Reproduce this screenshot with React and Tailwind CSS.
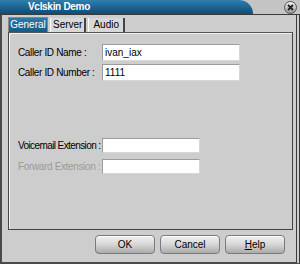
const font = { fontFamily: '"Liberation Sans", Arial, sans-serif' };

const Field = ({ label, disabled, wide, value, tight }) => (
  <div className="flex items-center h-[17px]">
    <span
      className={`w-[84px] shrink-0 text-[10px] ${tight ? "tracking-[-0.6px]" : "tracking-[-0.35px]"} leading-none whitespace-nowrap ${disabled ? "text-[#9a9a9a]" : "text-black"}`}
    >
      {label}
    </span>
    <div
      className={`${wide ? "w-[138px] h-[17px]" : "w-[98px] h-[15px]"} bg-white border border-[#9c9c9c] border-r-[#d8d8d8] border-b-[#d8d8d8] text-[10px] leading-none flex items-center px-[2px]`}
    >
      {value}
    </div>
  </div>
);

const Button = ({ children }) => (
  <button className="w-[60px] h-[19px] rounded-[4px] border border-[#7a7a7a] bg-gradient-to-b from-[#f2f2f2] via-[#d6d6d6] to-[#ababab] text-[10px] text-black leading-none shadow-[inset_0_1px_0_#ffffff]">
    {children}
  </button>
);

export default function App() {
  return (
    <div className="w-[300px] h-[264px] bg-[#cdcdcd] flex flex-col overflow-hidden" style={font}>
      {/* title bar */}
      <div className="h-[15px] flex border-b border-[#3a3a3a] bg-[#c4c4c4]">
        <div className="w-[253px] h-full rounded-tr-[16px] bg-gradient-to-b from-[#2f7fae] via-[#1c6592] to-[#0f4c74] flex items-center pl-[28px]">
          <span className="text-white font-bold text-[10px] leading-none tracking-[-0.3px]">Vclskin Demo</span>
        </div>
        <div className="flex-1 flex items-center justify-end pr-[3px]">
          <div className="w-[13px] h-[13px] rounded-full bg-gradient-to-b from-[#f0f0f0] to-[#9a9a9a] border border-[#555] flex items-center justify-center">
            <svg width="7" height="7" viewBox="0 0 7 7">
              <path d="M1 1L6 6M6 1L1 6" stroke="#222" strokeWidth="1.8" />
            </svg>
          </div>
        </div>
      </div>

      {/* body */}
      <div className="flex-1 flex flex-col border-l-[2px] border-double border-[#4a4a4a] border-r-[4px] border-r-[#3c3c3c] border-b-[2px] border-b-[#4a4a4a] pl-[6px] pr-[3px]">
        {/* tabs */}
        <div className="flex items-end h-[16px] mt-[1px] gap-[2px]">
          <div className="h-[15px] w-[40px] justify-center bg-gradient-to-b from-[#2b7aa8] to-[#145a86] text-white text-[10px] leading-none flex items-center border border-[#888] border-b-0">
            General
          </div>
          <div className="h-[14px] px-[2px] bg-[#d8d8d8] text-black text-[10px] leading-none flex items-center border-l border-l-white border-r-[2px] border-r-[#444]">
            Server
          </div>
          <div className="h-[14px] px-[4px] bg-[#d8d8d8] text-black text-[10px] leading-none flex items-center border-l border-l-white border-r-[2px] border-r-[#444]">
            Audio
          </div>
        </div>

        {/* panel */}
        <div className="h-[198px] border border-[#444] border-t-[#555] shadow-[inset_1px_1px_0_#f2f2f2] flex flex-col pl-[9px] pt-[11px]">
          <div className="flex flex-col gap-[3px]">
            <Field label="Caller ID Name :" wide value="ivan_iax" />
            <Field label="Caller ID Number :" wide value="1111" />
          </div>
          <div className="flex flex-col gap-[4px] mt-[56px]">
            <Field label="Voicemail Extension :" tight />
            <Field label="Forward Extension :" disabled />
          </div>
        </div>

        {/* buttons */}
        <div className="flex gap-[5px] pl-[87px] mt-[5px]">
          <Button>OK</Button>
          <Button>Cancel</Button>
          <Button>
            <span className="underline">H</span>elp
          </Button>
        </div>
      </div>
    </div>
  );
}
